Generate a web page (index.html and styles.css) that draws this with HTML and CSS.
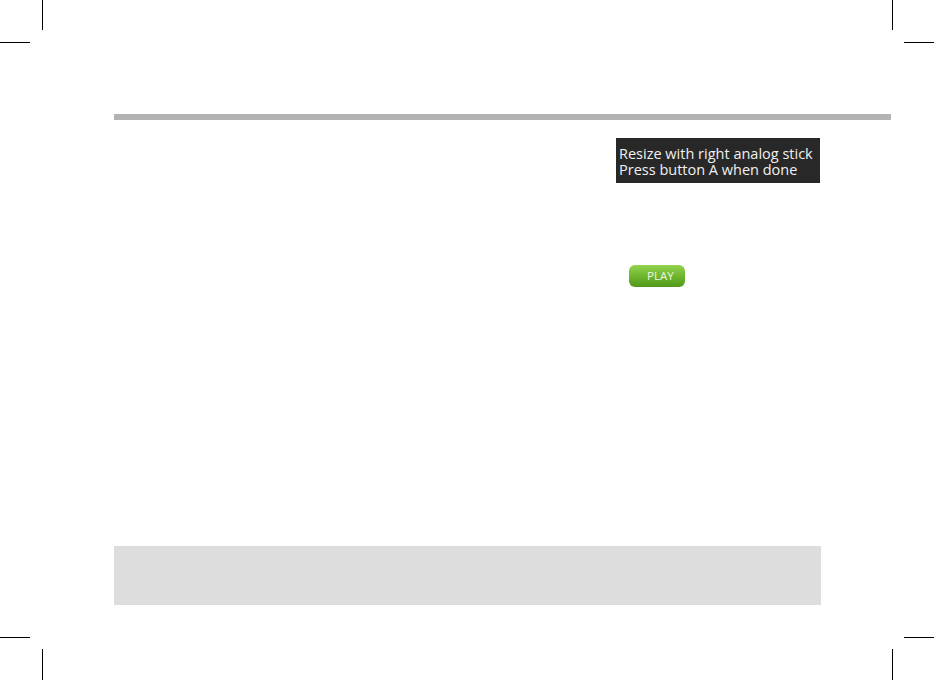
FILE: index.html
```html
<!DOCTYPE html>
<html lang="en">
<head>
  <meta charset="UTF-8">
  <meta name="viewport" content="width=device-width, initial-scale=1.0">
  <title>Manual page</title>
  <link rel="stylesheet" href="styles.css">
</head>
<body>
  <div class="sheet">
    <!-- Skæremærker i hjørnerne -->
    <span class="crop crop-v tl-v"></span>
    <span class="crop crop-h tl-h"></span>
    <span class="crop crop-v tr-v"></span>
    <span class="crop crop-h tr-h"></span>
    <span class="crop crop-h bl-h"></span>
    <span class="crop crop-v bl-v"></span>
    <span class="crop crop-h br-h"></span>
    <span class="crop crop-v br-v"></span>

    <div class="page">
      <div class="rule"></div>

      <div class="content">
        <div class="main-col"></div>
        <div class="side-col">
          <div class="hint">
            <div class="hint-line">Resize with right analog stick</div>
            <div class="hint-line">Press button A when done</div>
          </div>
          <div class="play">PLAY</div>
        </div>
      </div>

      <div class="note"></div>
    </div>
  </div>
</body>
</html>
```

FILE: styles.css
```css
/* Generelle stilarter */
body {
  margin: 0;
  padding: 0;
  background: #fff;
  font-family: 'Open Sans', 'Liberation Sans', sans-serif;
}
.sheet {
  position: relative;
  width: 935px;
  height: 680px;
  overflow: hidden;
}
.page {
  padding: 114px 0 0 114px;
}
.rule {
  width: 777px;
  height: 6px;
  background: #b3b3b3;
}
.content {
  display: flex;
  height: 426px;
}
.main-col {
  width: 502px;
}
.side-col {
  padding-top: 18px;
}
.hint {
  width: 204px;
  height: 45px;
  box-sizing: border-box;
  padding: 8px 0 0 3px;
  background: #282828;
  color: #f0f0f0;
  font-size: 14.5px;
  line-height: 16px;
  white-space: nowrap;
}
.play {
  width: 56px;
  height: 22px;
  margin: 82px 0 0 13px;
  box-sizing: border-box;
  padding-left: 18px;
  border-radius: 6px;
  background: linear-gradient(#92d24c, #6cb42c 55%, #52981c);
  color: #eef7e4;
  font-size: 11.5px;
  line-height: 22px;
}
.note {
  width: 707px;
  height: 59px;
  background: #dddddd;
}
/* Skæremærker */
.crop {
  position: absolute;
  background: #000;
}
.crop-v {
  width: 1px;
  height: 30px;
}
.crop-h {
  width: 30px;
  height: 1px;
}
.tl-v { left: 42px; top: 0; }
.tl-h { left: 0; top: 42px; }
.tr-v { left: 892px; top: 0; }
.tr-h { left: 904px; top: 42px; }
.bl-h { left: 0; top: 637px; }
.bl-v { left: 42px; top: 649px; height: 31px; }
.br-h { left: 904px; top: 637px; }
.br-v { left: 892px; top: 649px; height: 31px; }
```
